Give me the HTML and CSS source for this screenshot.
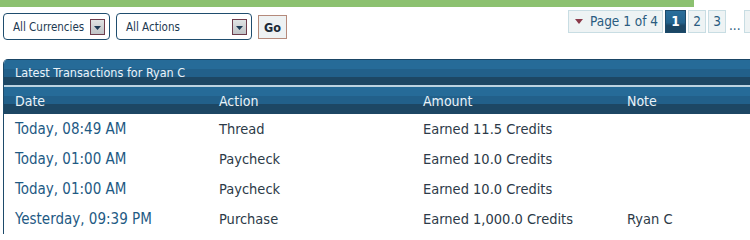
FILE: index.html
```html
<!DOCTYPE html>
<html lang="en">
<head>
<meta charset="utf-8">
<title>Transactions</title>
<link rel="stylesheet" href="styles.css">
</head>
<body>
<div class="page">
  <div class="topbar"></div>
  <div class="toolbar">
    <div class="filters">
      <div class="select select-currency">
        <span class="select-label">All Currencies</span>
        <span class="select-btn"><svg width="7" height="4" viewBox="0 0 7 4"><path d="M0 0H7L3.5 4Z" fill="#1d3a55"/></svg></span>
      </div>
      <div class="select select-action">
        <span class="select-label">All Actions</span>
        <span class="select-btn"><svg width="7" height="4" viewBox="0 0 7 4"><path d="M0 0H7L3.5 4Z" fill="#1d3a55"/></svg></span>
      </div>
      <button class="go-btn">Go</button>
    </div>
    <div class="pagination">
      <span class="pg pg-label"><svg class="pg-caret" width="8" height="5" viewBox="0 0 8 5"><path d="M0 0H8L4 5Z" fill="#8a3a4a"/></svg>Page 1 of 4</span>
      <span class="pg pg-current">1</span>
      <span class="pg">2</span>
      <span class="pg">3</span>
      <span class="pg-dots">...</span>
      <span class="pg pg-last"></span>
    </div>
  </div>
  <div class="panel">
    <div class="panel-title">Latest Transactions for Ryan C</div>
    <table class="tx">
      <thead>
        <tr><th>Date</th><th>Action</th><th>Amount</th><th>Note</th></tr>
      </thead>
      <tbody>
        <tr><td class="date">Today, 08:49 AM</td><td>Thread</td><td>Earned 11.5 Credits</td><td></td></tr>
        <tr><td class="date">Today, 01:00 AM</td><td>Paycheck</td><td>Earned 10.0 Credits</td><td></td></tr>
        <tr><td class="date">Today, 01:00 AM</td><td>Paycheck</td><td>Earned 10.0 Credits</td><td></td></tr>
        <tr><td class="date">Yesterday, 09:39 PM</td><td>Purchase</td><td>Earned 1,000.0 Credits</td><td>Ryan C</td></tr>
      </tbody>
    </table>
  </div>
</div>
</body>
</html>
```
FILE: styles.css
```css
html, body {
  margin: 0;
  padding: 0;
  background: #ffffff;
  overflow: hidden;
}
body {
  font-family: "DejaVu Sans Condensed", "DejaVu Sans", sans-serif;
  color: #2c3a48;
}
.page {
  width: 830px;
}
.topbar {
  width: 694px;
  height: 7px;
  background: #8cc170;
}
.toolbar {
  display: flex;
  align-items: flex-start;
  height: 52px;
}
.filters {
  display: flex;
  align-items: flex-start;
  margin-left: 3px;
  margin-top: 6px;
  gap: 6px;
}
.select {
  box-sizing: border-box;
  height: 27px;
  border: 1px solid #1f4d6e;
  border-radius: 4px;
  display: flex;
  align-items: center;
  justify-content: space-between;
  padding: 0 4px 0 9px;
  background: #fff;
}
.select-currency { width: 107px; }
.select-action { width: 136px; }
.select-label {
  font-size: 11.5px;
  color: #1e3a52;
  white-space: nowrap;
}
.select-btn {
  box-sizing: border-box;
  width: 15px;
  height: 16px;
  border: 1px solid #6e3d4c;
  background: linear-gradient(#e0e3e4, #bfc3c6);
  display: flex;
  align-items: center;
  justify-content: center;
  padding-top: 3px;
}
.go-btn {
  box-sizing: border-box;
  margin-top: 2px;
  height: 24px;
  width: 29px;
  padding: 0;
  border: 1px solid #b58a7b;
  background: #eef2f3;
  font-family: inherit;
  font-weight: bold;
  font-size: 12.5px;
  color: #1a2a38;
}
.pagination {
  display: flex;
  align-items: flex-start;
  margin-left: 281px;
  margin-top: 3px;
  gap: 2px;
}
.pg {
  box-sizing: border-box;
  height: 23px;
  min-width: 18px;
  padding: 0 3px;
  border: 1px solid #c8dde3;
  background: #eef3f4;
  color: #2a5c80;
  font-size: 13.5px;
  line-height: 21px;
  text-align: center;
  white-space: nowrap;
}
.pg-label {
  width: 95px;
  padding: 0 0 0 6px;
  display: flex;
  align-items: center;
  gap: 7px;
}
.pg-current {
  width: 21px;
  border-color: #1c4a6a;
  background: linear-gradient(#2a6e9b 0, #22628c 55%, #1b4664 70%, #1b4664 100%);
  color: #ffffff;
  font-weight: bold;
}
.pg-dots {
  font-size: 13.5px;
  color: #2a5c80;
  line-height: 30px;
  padding: 0 1px;
}
.pg-last {
  width: 60px;
}
.panel {
  margin-left: 3px;
  width: 817px;
  border-left: 1px solid #1d4a6a;
  border-top-left-radius: 5px;
  overflow: hidden;
}
.panel-title {
  height: 25px;
  border-top: 1px solid #1a4565;
  border-bottom: 2px solid #bcd3e1;
  background: linear-gradient(#266b98 0, #266b98 9px, #22608a 9px, #22608a 17px, #1d4764 17px, #1d4764 25px);
  color: #eaf2f7;
  font-size: 12.5px;
  line-height: 26px;
  padding-left: 11px;
}
.tx {
  width: 816px;
  table-layout: fixed;
  border-collapse: collapse;
}
.tx th {
  height: 27px;
  padding: 0 0 0 11px;
  text-align: left;
  font-weight: normal;
  font-size: 14px;
  color: #eaf2f7;
  background: linear-gradient(#266b98 0, #266b98 9px, #22608a 9px, #22608a 17px, #1d4764 17px, #1d4764 27px);
}
.tx td {
  height: 30px;
  padding: 0 0 0 11px;
  font-size: 14.5px;
  color: #2c3a48;
  white-space: nowrap;
}
.tx td.date {
  color: #1e5a84;
  font-size: 15px;
}
```
